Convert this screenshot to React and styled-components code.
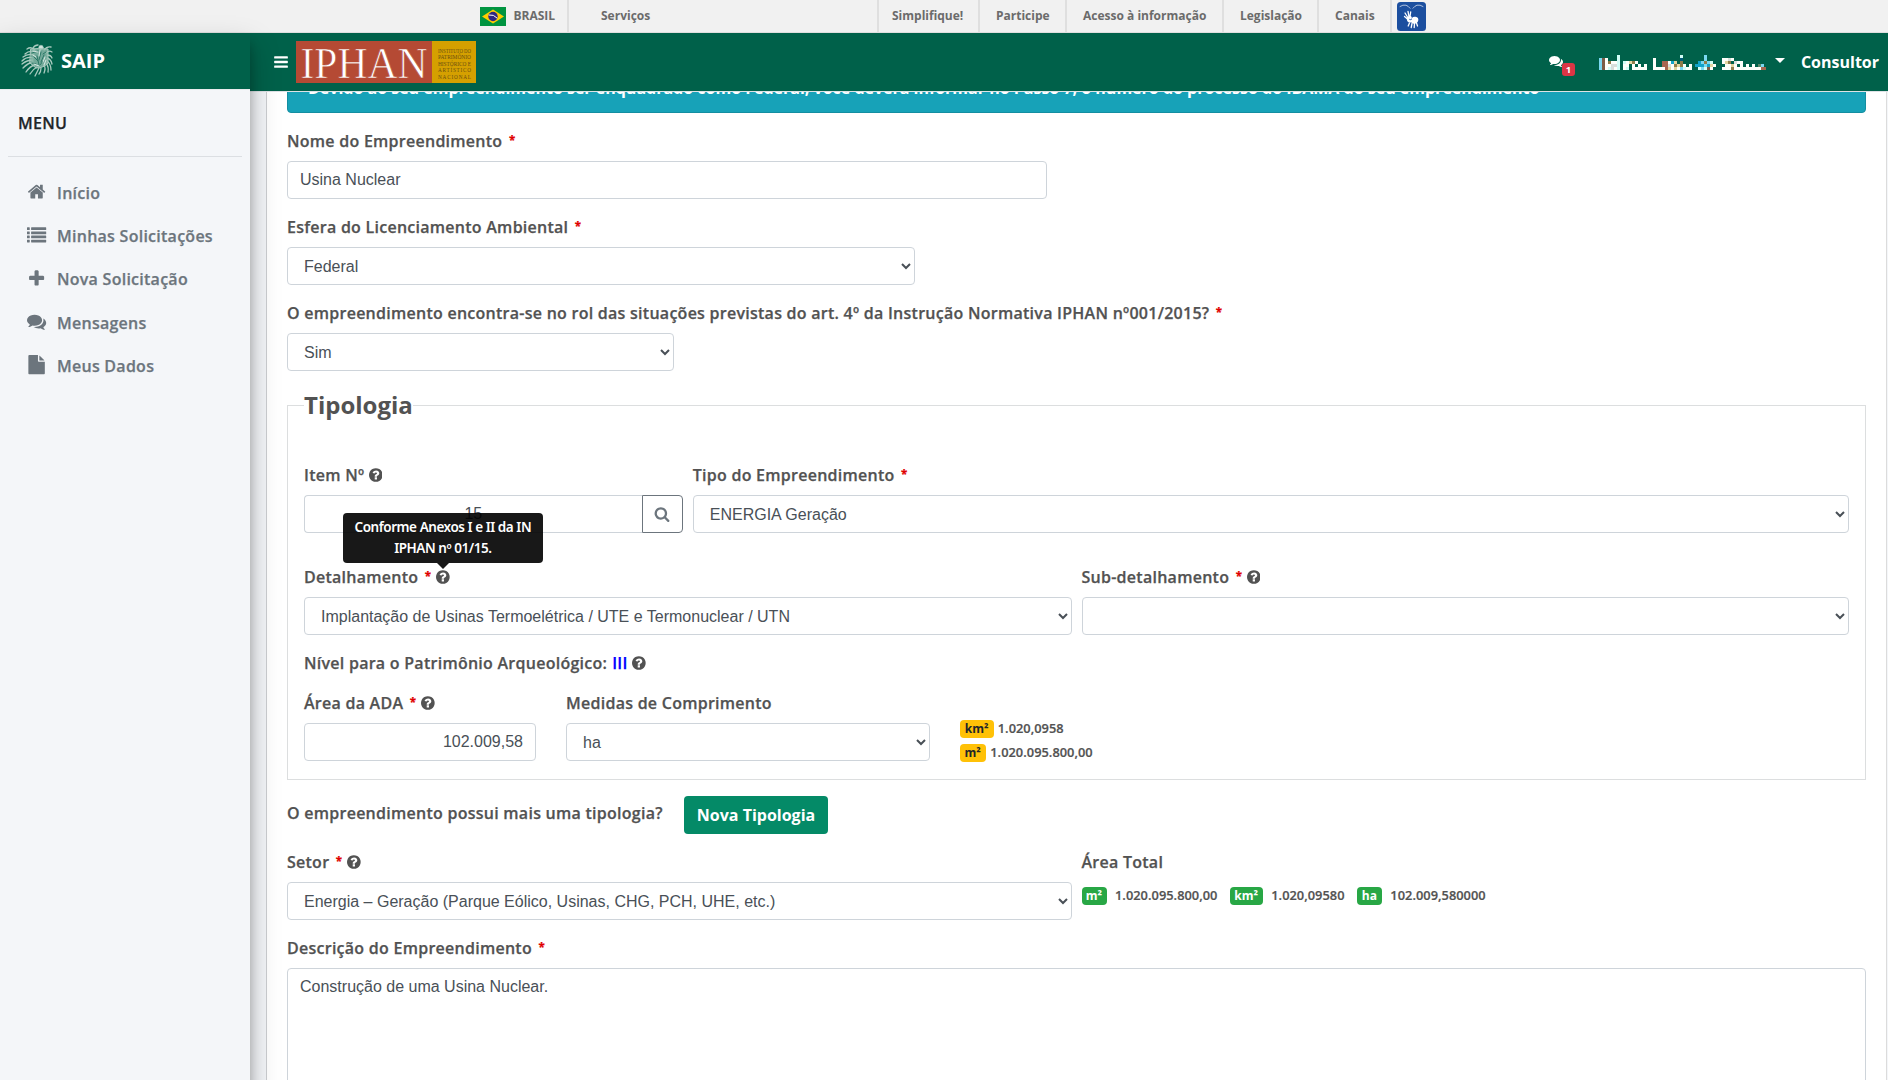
import React from 'react';
import styled, { createGlobalStyle, css } from 'styled-components';

const Global = createGlobalStyle`
  *, *::before, *::after { box-sizing: border-box; }
  html, body { margin: 0; height: 100%; overflow: hidden; }
  body { font: 400 16px/24px "Open Sans", "Noto Sans", sans-serif; color: #525252; background: #f4f6f9; }
`;

const sans = '"Liberation Sans", Arial, sans-serif';

const strong = css`
  font-weight: 600; letter-spacing: .26px; -webkit-text-stroke: .25px currentColor;
`;

const Page = styled.div`height: 1080px; display: flex; flex-direction: column; overflow: hidden;`;

/* ---------- government bar ---------- */
const GovBar = styled.div`
  height: 33px; flex: none; display: flex; padding-left: 480px;
  background: #f1f1f1; border-bottom: 1px solid #dfdfdf;
  font-size: 12px; font-weight: 700; color: #6b6b6b; line-height: 32px;
`;
const GovBrand = styled.div`
  width: 89px; display: flex; align-items: center; gap: 7.500px; border-right: 2px solid #dfdfdf;
  svg { display: block; }
`;
const GovItem = styled.div`
  width: ${p => p.$w}px; padding-left: ${p => p.$pad}px; border-right: 2px solid #dfdfdf;
  white-space: nowrap;
`;
const GovLibras = styled.div`padding: 2px 0 0 5px; svg { display: block; }`;

const Flag = () => (
  <svg width="26" height="19" viewBox="0 0 26 19">
    <rect width="26" height="19" fill="#009440" />
    <path d="M13 2.5 24 9.500 13 16.500 2 9.500z" fill="#fc0" />
    <circle cx="13" cy="9.500" r="4.700" fill="#302681" />
    <path d="M8.800 8q5-.8 8.400 3.200" stroke="#fff" strokeWidth="1" fill="none" />
  </svg>
);

const Libras = () => (
  <svg width="29" height="29" viewBox="0 0 29 29">
    <rect width="29" height="29" rx="3.500" fill="#1c4f9f" />
    <g fill="none" stroke="#fff" strokeLinecap="round">
      <path d="M3 4.500q3-2 6-1.300 2 .6 4 3M26 4.500q-3-2-6-1.300-2 .6-4 3" strokeWidth=".8" opacity=".8" />
      <path d="M8 11l2.500 4M11 9.500l1 5M13.700 10l-.7 4.500M7.500 14.500l3 2.500" strokeWidth="1.300" />
      <path d="M12.500 21l-1.300 3M15 21.500l-.8 4M17.500 21.500l-.3 4M19.500 21l1 3" strokeWidth="1.300" />
    </g>
    <path d="M9.500 15.500q2-2 4.500-1.500l1 2q1-1.500 3.500-1.200 3.500.7 2.700 4-1 3.200-4.500 2.900-1.700-.1-2.200-1.200-3.500.5-4.300-1.500z" fill="#fff" />
    <path d="M12.300 17.300q1.500 1 2.700-.5" stroke="#1c4f9f" strokeWidth=".9" fill="none" />
  </svg>
);

/* ---------- shell ---------- */
const Shell = styled.div`flex: 1; display: flex; min-height: 0;`;
const Sidebar = styled.aside`
  width: 250px; flex: none; position: relative; z-index: 2; background: #f4f6f9; height: 1100px;
  box-shadow: 0 14px 28px rgba(0,0,0,.25), 0 10px 10px rgba(0,0,0,.22);
`;
const Brand = styled.div`
  height: 57px; display: flex; align-items: center; gap: 8px; padding: 0 0 1px 21px;
  background: #00614a; border-bottom: 1px solid #e9ecef;
  color: #fff; font-size: 20px; font-weight: 700;
`;
const MenuTitle = styled.div`
  margin: 0 8px; padding: 21px 10px 21px; height: 67px; border-bottom: 1px solid #dcdfe3;
  ${strong} color: #212529;
`;
const Nav = styled.nav`padding-top: 16px; display: flex; flex-direction: column; gap: 3.2px;`;
const NavItem = styled.a`
  height: 40px; display: flex; align-items: center; padding-left: 24px; gap: 8px;
  ${strong} color: #6c757d;
`;
const NavIcon = styled.span`width: 25px; display: flex; justify-content: center; position: relative; top: -1px; svg { display: block; }`;

const Body = styled.div`flex: 1; min-width: 0; display: flex; flex-direction: column; background: #f4f6f9;`;
const Navbar = styled.header`
  height: 59px; flex: none; display: flex; align-items: center; padding: 0 9px 0 23px;
  background: #00614a; border-bottom: 1px solid #dee2e6; color: #fff;
`;
const Logo = styled.svg`display: block; margin: 0 auto 0 7px;`;
const Messages = styled.div`position: relative; width: 26px; height: 24px; margin-right: 24px; svg { display: block; margin-top: 4px; }`;
const Count = styled.span`
  position: absolute; left: 13px; top: 13px; width: 13px; height: 13px; border-radius: 3px;
  background: #dc3545; font: 700 9.600px/13px "Open Sans", sans-serif; text-align: center;
`;
const Caret = styled.span`margin: -3px 16px 0 9px; border: 5px solid transparent; border-top-color: #fff; border-bottom: 0;`;
const Role = styled.span`font-weight: 700;`;

const Main = styled.main`flex: 1; min-height: 0; overflow: hidden; padding: 0 1px 0 16px;`;
const Card = styled.section`
  margin-top: -49px; padding: 20px 20px 0; height: 1100px; background: #fff; border: 1px solid #ccced1;
  border-top: 0; border-right-color: #dcdcdc;
`;
const Alert = styled.div`
  height: 50px; padding: 12px 20px; margin-bottom: 16px; border-radius: 4px; white-space: nowrap;
  background: #17a2b8; border: 1px solid #148ea1; color: #fff; font-weight: 700;
`;

/* ---------- form ---------- */
const Field = styled.div`width: ${p => (p.$w ? p.$w + 'px' : 'auto')}; margin-bottom: ${p => p.$mb ?? 16}px;`;
const Label = styled.label`
  display: flex; align-items: center; height: 24px; margin-bottom: ${p => p.$mb ?? 8}px;
  ${strong} white-space: nowrap;
`;
const Star = styled.span`
  color: #e00000; font-size: 11.500px; font-weight: 700; line-height: 12px; margin: -1px 0 0 6.500px;
`;
const Help = styled.span`margin-left: 4.500px; display: flex; position: relative;`;
const Blue = styled.span`color: #00f; margin-left: 5px;`;
const Control = styled.input`
  display: block; width: 100%; height: 38px; padding: 6px 12px; border: 1px solid #ced4da; border-radius: 4px;
  font: 400 16px/24px ${sans}; color: #495057; background: #fff; outline: 0; text-align: ${p => p.$align || 'left'};
`;
const Select = styled.select`
  display: block; width: 100%; height: 38px; padding: 6px 12px; border: 1px solid #ced4da; border-radius: 4px;
  font: 400 16px/24px ${sans}; color: #495057; background: #fff;
`;
const Area = styled.textarea`
  display: block; width: 100%; height: 200px; padding: 6px 12px; border: 1px solid #ced4da; border-radius: 4px;
  font: 400 16px/24px ${sans}; color: #495057; background: #fff; resize: none;
`;
const Group = styled.div`
  display: flex;
  input { border-radius: 4px 0 0 4px; flex: 1; border-right: 0; }
`;
const SearchButton = styled.button`
  width: 41px; height: 38px; padding: 0; display: grid; place-items: center;
  border: 1px solid #6c757d; border-radius: 0 4px 4px 0; background: #fff; color: #6c757d;
`;
const Fieldset = styled.fieldset`
  margin: 0; height: 393px; padding: 40px 16px 0; border: 1px solid #dcdedf; min-width: 0;
`;
const Legend = styled.legend`
  padding: 0; font-size: 24px; line-height: 36px; font-weight: 700;
`;
const Grid = styled.div`
  display: grid; grid-template-columns: ${p => p.$cols}; column-gap: ${p => p.$gap || 10}px;
`;
const Tooltip = styled.div`
  position: absolute; left: -93px; top: -56px; width: 200px; height: 50px; padding: 4px; border-radius: 4px;
  background: #000; opacity: .9; color: #fff; text-align: center; z-index: 3; white-space: normal;
  font: 600 13.500px/21px "Noto Sans", "Open Sans", sans-serif; letter-spacing: -.45px; -webkit-text-stroke: 0;
  &::after { content: ""; position: absolute; left: 94px; top: 50px; border: 6.400px solid transparent; border-top-color: #000; border-bottom: 0; }
`;
const Measures = styled.div`padding-top: 29px; display: flex; flex-direction: column; gap: 6px;`;
const Measure = styled.div`
  display: flex; align-items: flex-start; height: 18px; gap: ${p => p.$gap}px;
  font-size: 12.800px; line-height: 17px; font-weight: 600; letter-spacing: .04px; -webkit-text-stroke: .2px currentColor;
`;
const Badge = styled.span`
  height: 18px; min-width: ${p => p.$w}px; border-radius: 4px; text-align: center; line-height: 18px; font-size: 12px; font-weight: 700;
  -webkit-text-stroke: 0;
  background: ${p => (p.$green ? '#28a745' : '#ffc107')}; color: ${p => (p.$green ? '#fff' : '#212529')};
`;
const Totals = styled.div`display: flex; gap: 12.300px; padding-top: 5px;`;
const More = styled.div`display: flex; gap: 20px; padding: 16px 0;`;
const Question = styled.div`padding-top: 5px; ${strong} width: 377px; white-space: nowrap;`;
const Primary = styled.button`
  width: 144px; height: 38px; padding: 0; border: 0; border-radius: 4px; background: #048a67; color: #fff;
  font: 700 16px/24px "Open Sans", sans-serif; white-space: nowrap;
`;

/* ---------- icons ---------- */
const paths = {
  home: 'M1472 992v480q0 26-19 45t-45 19h-384v-384h-256v384h-384q-26 0-45-19t-19-45v-480q0-1 .5-3t.5-3l575-474 575 474q1 2 1 6zm223-69l-62 74q-8 9-21 11h-3q-13 0-21-7l-692-577-692 577q-12 8-24 7-13-2-21-11l-62-74q-8-10-7-23.500t11-21.500l719-599q32-26 76-26t76 26l244 204v-195q0-14 9-23t23-9h192q14 0 23 9t9 23v408l219 182q10 8 11 21.500t-7 23.500z',
  list: 'M32 1280h192q32 0 32 32v192q0 32-32 32h-192q-32 0-32-32v-192q0-32 32-32zM32 896h192q32 0 32 32v192q0 32-32 32h-192q-32 0-32-32v-192q0-32 32-32zM32 512h192q32 0 32 32v192q0 32-32 32h-192q-32 0-32-32v-192q0-32 32-32zM32 128h192q32 0 32 32v192q0 32-32 32h-192q-32 0-32-32v-192q0-32 32-32zM416 1280h1344q32 0 32 32v192q0 32-32 32h-1344q-32 0-32-32v-192q0-32 32-32zM416 896h1344q32 0 32 32v192q0 32-32 32h-1344q-32 0-32-32v-192q0-32 32-32zM416 512h1344q32 0 32 32v192q0 32-32 32h-1344q-32 0-32-32v-192q0-32 32-32zM416 128h1344q32 0 32 32v192q0 32-32 32h-1344q-32 0-32-32v-192q0-32 32-32z',
  plus: 'M1600 736v192q0 40-28 68t-68 28h-416v416q0 40-28 68t-68 28h-192q-40 0-68-28t-28-68v-416h-416q-40 0-68-28t-28-68v-192q0-40 28-68t68-28h416v-416q0-40 28-68t68-28h192q40 0 68 28t28 68v416h416q40 0 68 28t28 68z',
  comments: 'M1408 768q0 139-94 257t-256.500 186.500-353.500 68.500q-86 0-176-16-124 88-278 128-36 9-86 16h-3q-11 0-20.500-8t-11.500-21q-1-3-1-6.500t.5-6.500 2-6l2.500-5 3.500-5.500 4-5 4.500-5 4-4.500q5-6 23-25t26-29.500 22.500-29 25-38.500 20.500-44q-124-72-195-177t-71-224q0-139 94-257t256.500-186.500 353.500-68.500 353.500 68.500 256.500 186.500 94 257zm384 256q0 120-71 224.500t-195 176.500q10 24 20.500 44t25 38.500 22.500 29 26 29.500 23 25q1 1 4 4.500t4.500 5 4 5 3.500 5.500l2.500 5 2 6 .5 6.500-1 6.500q-3 14-13 22t-22 7q-50-7-86-16-154-40-278-128-90 16-176 16-271 0-472-132 58 4 88 4 161 0 309-45t264-129q125-92 192-212t67-254q0-77-23-152 129 71 204 178t75 230z',
  file: 'M1152 512v-472q22 14 36 28l408 408q14 14 28 36h-472zm-128 32q0 40 28 68t68 28h544v1056q0 40-28 68t-68 28h-1344q-40 0-68-28t-28-68v-1600q0-40 28-68t68-28h800v544z',
  bars: 'M1664 1344v128q0 64-64 64h-1408q-64 0-64-64v-128q0-64 64-64h1408q64 0 64 64zM1664 832v128q0 64-64 64h-1408q-64 0-64-64v-128q0-64 64-64h1408q64 0 64 64zM1664 320v128q0 64-64 64h-1408q-64 0-64-64v-128q0-64 64-64h1408q64 0 64 64z',
  search: 'M1216 832q0-185-131.500-316.500t-316.500-131.500-316.500 131.500-131.500 316.500 131.500 316.500 316.500 131.500 316.500-131.500 131.500-316.500zm512 832q0 52-38 90t-90 38q-54 0-90-38l-343-342q-179 124-399 124-143 0-273.500-55.500t-225-150-150-225-55.500-273.500 55.500-273.500 150-225 225-150 273.500-55.500 273.500 55.500 225 150 150 225 55.500 273.500q0 220-124 399l343 343q37 37 37 90z',
  help: 'M1024 1376v-192q0-14-9-23t-23-9h-192q-14 0-23 9t-9 23v192q0 14 9 23t23 9h192q14 0 23-9t9-23zm256-672q0-88-55.500-163t-138.500-116-170-41q-243 0-371 213-15 24 8 42l132 100q7 6 19 6 16 0 25-12 53-68 86-92 34-24 86-24 48 0 85.500 26t37.500 59q0 38-20 61t-68 45q-63 28-115.500 86.500t-52.500 125.500v36q0 14 9 23t23 9h192q14 0 23-9t9-23q0-19 21.500-49.500t54.500-49.500q32-18 49-28.500t46-35 44.500-48 28-60.500 12.500-81zm384 192q0 209-103 385.500t-279.500 279.500-385.500 103-385.500-103-279.500-279.500-103-385.500 103-385.500 279.500-279.500 385.500-103 385.500 103 279.500 279.500 103 385.500z',
};
const Icon = ({ name, size }) => (
  <svg width={size} height={size} viewBox="0 0 1792 1792" fill="currentColor" overflow="visible"><path d={paths[name]} /></svg>
);
const HelpMark = ({ children }) => (
  <Help>
    <svg width="13.700" height="16" viewBox="128 0 1536 1792" fill="currentColor"><path d={paths.help} /></svg>
    {children}
  </Help>
);

const Emblem = () => (
  <svg width="32" height="34" viewBox="0 0 32 34" fill="none" stroke="#a9cabf" strokeLinecap="round">
    <circle cx="20" cy="3.500" r="2.300" fill="#cfe3dc" strokeWidth=".5" />
    <path strokeWidth="1.300" d="M14 6Q10 2 6 5M14 8Q8 6 4 10M13 11Q7 9 2 13M12 14Q6 12 1 17M12 16Q6 16 1 20M12 18Q7 19 2 24M14 21Q9 22 5 28M16 23Q12 25 9 30M18 24Q16 28 14 32M20 24Q20 28 18 30M23 21Q25 24 23 29M25 19Q28 23 27 28M26 17Q30 20 30 26M26 14Q30 15 31 20M26 11Q30 11 31 14M25 9Q28 6 31 8M23 6Q26 2 30 3M12 4Q14 1 17 1" />
    <path fill="#8fbbad" fillOpacity=".8" strokeWidth="1" d="M10 5Q17 4 27 5L27 19Q23 24 15 24L9 19Z" />
    <path stroke="#2a7766" strokeWidth="1" d="M16 12l2 9M20 8l-2 8M23 11l-3 7M13 13l4 4M22 17l-3 4M11 9l6-2M11 19l4 1M25 8l-3 2" />
    <path stroke="#e3f0ec" strokeWidth=".9" d="M12 7l5 1M12 11l3 2M24 13l-2 5M19 6l-1 6M13 20l5 2M25 16l-2 5" />
  </svg>
);

/* Redacted user name: each entry is [column, colour codes] on a 3px mosaic. */
const tones = { w: '#fdfffa', c: '#7bd7f0', p: '#d3fdf6', b: '#7b5c45', o: '#e3d5a0', t: '#12a3c9', n: '#8f7d4a', r: '#a8674f', s: '#d8dfdb', g: '#5d8a6b', d: '#005a78' };
const mosaic = [
  [[6, 'p'], [27, 'p'], [35, 'c']],
  [[0, 'cbw'], [6, 'p'], [18, 'w'], [27, 'd'], [35, 'c'], [41, 'wwsw']],
  [[0, 'cbwn'], [4, 'ww'], [6, 'p'], [8, 'pwonw'], [18, 'w'], [21, 'rr'], [23, 'wto'], [27, 'n'], [33, 'tcnc'], [37, 'p'], [41, 'won'], [45, 'sww']],
  [[0, 'cbww'], [4, 'ss'], [6, 'p'], [8, 'ww.w'], [13, 'w.w'], [18, 'w'], [21, 'rrsw'], [25, 'no'], [27, 'nw'], [30, 'w'], [32, 'tttct'], [37, 'ow'], [42, 'wwo'], [45, 'w.w'], [49, 'w.w.gc']],
  [[0, 'cbwp'], [4, 'sw'], [6, 'p'], [8, 'wp.w'], [12, 'wwww'], [18, 'wwww'], [22, 'row'], [25, 'ow'], [27, 'cpww'], [33, 'pcpbw'], [41, 'wwwn'], [45, 'wwwwwwww'], [53, 'wrr']],
];
const UserName = () => (
  <svg width="167" height="15" viewBox="0 0 167 15" shapeRendering="crispEdges">
    {mosaic.flatMap((row, y) => row.flatMap(([col, codes]) => [...codes].map((ch, i) => tones[ch] && (
      <rect key={col + i + '-' + y} x={(col + i) * 3} y={y * 3} width="3" height="3" fill={tones[ch]} />
    ))))}
  </svg>
);

const logoLines = ['INSTITUTO DO', 'PATRIMÔNIO', 'HISTÓRICO E', 'ARTÍSTICO', 'NACIONAL'];

const menu = [
  ['home', 'Início'], ['list', 'Minhas Solicitações'], ['plus', 'Nova Solicitação'],
  ['comments', 'Mensagens'], ['file', 'Meus Dados'],
];

export default function App() {
  return (
    <Page>
      <Global />
      <GovBar>
        <GovBrand><Flag />BRASIL</GovBrand>
        <GovItem $w={310} $pad={32}>Serviços</GovItem>
        <GovItem $w={101} $pad={13}>Simplifique!</GovItem>
        <GovItem $w={87} $pad={16}>Participe</GovItem>
        <GovItem $w={157} $pad={16}>Acesso à informação</GovItem>
        <GovItem $w={95} $pad={16}>Legislação</GovItem>
        <GovItem $w={73} $pad={16}>Canais</GovItem>
        <GovLibras><Libras /></GovLibras>
      </GovBar>
      <Shell>
        <Sidebar>
          <Brand><Emblem />SAIP</Brand>
          <MenuTitle>MENU</MenuTitle>
          <Nav>
            {menu.map(([icon, text]) => (
              <NavItem key={text}><NavIcon><Icon name={icon} size={19.2} /></NavIcon>{text}</NavItem>
            ))}
          </Nav>
        </Sidebar>
        <Body>
          <Navbar>
            <Icon name="bars" size={16} />
            <Logo width="180" height="42" viewBox="0 0 180 42">
              <rect width="136" height="42" fill="#b54a34" />
              <rect x="136" width="44" height="42" fill="#d5a000" />
              <text x="4.500" y="37.300" fill="#fff" stroke="#b54a34" strokeWidth=".7" fontFamily="Liberation Serif, serif" fontSize="45" textLength="127" lengthAdjust="spacingAndGlyphs">IPHAN</text>
              {logoLines.map((t, i) => (
                <text key={t} x="142" y={11.8 + i * 6.5} fill="#6b4f10" fontFamily="Liberation Serif, serif" fontSize="5.200" textLength="33" lengthAdjust={i < 3 ? 'spacingAndGlyphs' : 'spacing'}>{t}</text>
              ))}
            </Logo>
            <Messages><Icon name="comments" size={14} /><Count>1</Count></Messages>
            <UserName />
            <Caret />
            <Role>Consultor</Role>
          </Navbar>
          <Main>
            <Card>
              <Alert>Devido ao seu empreendimento ser enquadrado como Federal, você deverá informar no Passo 7, o número do processo do IBAMA do seu empreendimento</Alert>
              <Field $w={760}>
                <Label>Nome do Empreendimento<Star>*</Star></Label>
                <Control defaultValue="Usina Nuclear" />
              </Field>
              <Field $w={628}>
                <Label>Esfera do Licenciamento Ambiental<Star>*</Star></Label>
                <Select><option>Federal</option></Select>
              </Field>
              <Field $w={387}>
                <Label>O empreendimento encontra-se no rol das situações previstas do art. 4º da Instrução Normativa IPHAN nº001/2015?<Star>*</Star></Label>
                <Select><option>Sim</option></Select>
              </Field>
              <Fieldset>
                <Legend>Tipologia</Legend>
                <Grid $cols="378.750px 1fr">
                  <Field $mb={32}>
                    <Label>Item Nº<HelpMark /></Label>
                    <Group>
                      <Control defaultValue="15" $align="center" />
                      <SearchButton><Icon name="search" size={16} /></SearchButton>
                    </Group>
                  </Field>
                  <Field $mb={32}>
                    <Label>Tipo do Empreendimento<Star>*</Star></Label>
                    <Select><option>ENERGIA Geração</option></Select>
                  </Field>
                </Grid>
                <Grid $cols="1fr 1fr">
                  <Field>
                    <Label>
                      Detalhamento<Star>*</Star>
                      <HelpMark><Tooltip>Conforme Anexos I e II da IN IPHAN nº 01/15.</Tooltip></HelpMark>
                    </Label>
                    <Select><option>Implantação de Usinas Termoelétrica / UTE e Termonuclear / UTN</option></Select>
                  </Field>
                  <Field>
                    <Label>Sub-detalhamento<Star>*</Star><HelpMark /></Label>
                    <Select><option></option></Select>
                  </Field>
                </Grid>
                <Label $mb={16}>Nível para o Patrimônio Arqueológico:<Blue>III</Blue><HelpMark /></Label>
                <Grid $cols="232px 363.750px 1fr" $gap={30}>
                  <Field $mb={0}>
                    <Label>Área da ADA<Star>*</Star><HelpMark /></Label>
                    <Control defaultValue="102.009,58" $align="right" />
                  </Field>
                  <Field $mb={0}>
                    <Label>Medidas de Comprimento</Label>
                    <Select><option>ha</option></Select>
                  </Field>
                  <Measures>
                    <Measure $gap={4}><Badge $w={34}>km²</Badge>1.020,0958</Measure>
                    <Measure $gap={4.5}><Badge $w={26}>m²</Badge>1.020.095.800,00</Measure>
                  </Measures>
                </Grid>
              </Fieldset>
              <More>
                <Question>O empreendimento possui mais uma tipologia?</Question>
                <Primary>Nova Tipologia</Primary>
              </More>
              <Grid $cols="784.500px 1fr">
                <Field>
                  <Label>Setor<Star>*</Star><HelpMark /></Label>
                  <Select><option>Energia – Geração (Parque Eólico, Usinas, CHG, PCH, UHE, etc.)</option></Select>
                </Field>
                <Field>
                  <Label>Área Total</Label>
                  <Totals>
                    <Measure $gap={8.5}><Badge $green $w={25}>m²</Badge>1.020.095.800,00</Measure>
                    <Measure $gap={8.5}><Badge $green $w={33}>km²</Badge>1.020,09580</Measure>
                    <Measure $gap={8.5}><Badge $green $w={25}>ha</Badge>102.009,580000</Measure>
                  </Totals>
                </Field>
              </Grid>
              <Field>
                <Label>Descrição do Empreendimento<Star>*</Star></Label>
                <Area defaultValue="Construção de uma Usina Nuclear." />
              </Field>
            </Card>
          </Main>
        </Body>
      </Shell>
    </Page>
  );
}
